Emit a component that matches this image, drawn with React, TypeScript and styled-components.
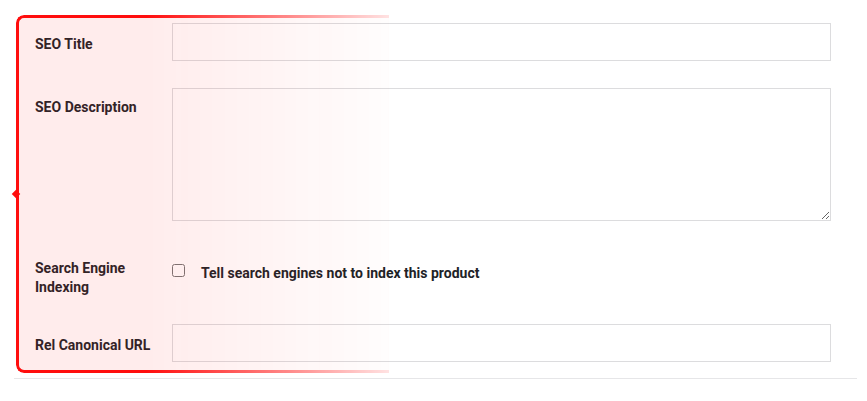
import React from "react";
import styled, { createGlobalStyle } from "styled-components";

const Global = createGlobalStyle`
  html, body { margin: 0; padding: 0; background: #fff; }
  body { font-family: Roboto, "Liberation Sans", Arial, sans-serif; }
`;

const Page = styled.div`
  position: relative;
  width: 867px;
  height: 401px;
`;

const Form = styled.div`
  margin-left: 14px;
  width: 843px;
  padding: 23px 0 16px 21px;
  box-sizing: border-box;
  border-bottom: 1px solid #e6e6e8;
  display: flex;
  flex-direction: column;
  gap: 27px;
`;

const Row = styled.div<{ $top?: boolean }>`
  display: grid;
  grid-template-columns: 137px 659px;
  align-items: ${(p) => (p.$top ? "start" : "center")};
`;

const Label = styled.label<{ $pad?: number }>`
  font-size: 14px;
  font-weight: 700;
  line-height: 19px;
  color: #1d2327;
  padding-top: ${(p) => p.$pad ?? 4}px;
`;

const TextInput = styled.input`
  box-sizing: border-box;
  width: 659px;
  height: 38px;
  margin: 0;
  border: 1px solid #dcdcde;
  border-radius: 0;
  background: #fff;
  font: inherit;
  outline: none;
`;

const TextArea = styled.textarea`
  box-sizing: border-box;
  display: block;
  width: 659px;
  height: 133px;
  margin: 0;
  border: 1px solid #dcdcde;
  border-radius: 0;
  background: #fff;
  font: inherit;
  outline: none;
`;

const CheckLine = styled.div`
  display: flex;
  align-items: flex-start;
  gap: 16px;
  padding-top: 16px;
`;

const Check = styled.input`
  width: 13px;
  height: 13px;
  margin: 0;
`;

const CheckText = styled.span`
  font-size: 14px;
  font-weight: 700;
  color: #1d2327;
  line-height: 20px;
  margin-top: -1px;
`;

const Highlight = styled.div`
  position: absolute;
  left: 16px;
  top: 15px;
  width: 373px;
  height: 358px;
  pointer-events: none;
`;

const Frame = styled.div`
  width: 100%;
  height: 100%;
  box-sizing: border-box;
  border: 3px solid #ff0d0d;
  border-right: none;
  border-radius: 8px 0 0 8px;
  background: rgba(255, 40, 40, 0.09);
  -webkit-mask-image: linear-gradient(to right, #000 0%, #000 35%, rgba(0,0,0,0.12) 100%);
  mask-image: linear-gradient(to right, #000 0%, #000 35%, rgba(0,0,0,0.12) 100%);
`;

const Notch = styled.div`
  position: absolute;
  left: -3px;
  top: 176px;
  width: 6px;
  height: 6px;
  background: #ff0d0d;
  transform: rotate(45deg);
`;

export default function App() {
  return (
    <Page>
      <Global />
      <Form>
        <Row>
          <Label>SEO Title</Label>
          <TextInput type="text" />
        </Row>
        <Row $top>
          <Label $pad={10}>SEO Description</Label>
          <TextArea />
        </Row>
        <Row $top>
          <Label $pad={11}>
            Search Engine
            <br />
            Indexing
          </Label>
          <CheckLine>
            <Check type="checkbox" />
            <CheckText>Tell search engines not to index this product</CheckText>
          </CheckLine>
        </Row>
        <Row>
          <Label>Rel Canonical URL</Label>
          <TextInput type="text" />
        </Row>
      </Form>
      <Highlight>
        <Frame />
        <Notch />
      </Highlight>
    </Page>
  );
}
